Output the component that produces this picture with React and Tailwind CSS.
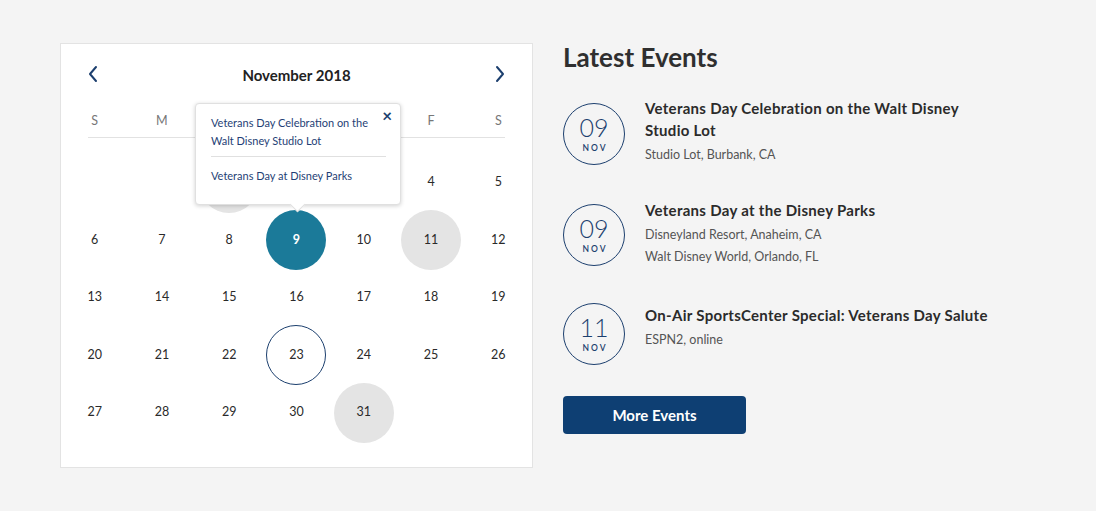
const weekdays = ["S", "M", "T", "W", "T", "F", "S"];

// null = empty cell, numbers from the picture as shown
const weeks = [
  [null, null, { d: 1, mark: "gray" }, { d: 2 }, { d: 3 }, { d: 4 }, { d: 5 }],
  [{ d: 6 }, { d: 7 }, { d: 8 }, { d: 9, mark: "active" }, { d: 10 }, { d: 11, mark: "gray" }, { d: 12 }],
  [{ d: 13 }, { d: 14 }, { d: 15 }, { d: 16 }, { d: 17 }, { d: 18 }, { d: 19 }],
  [{ d: 20 }, { d: 21 }, { d: 22 }, { d: 23, mark: "today" }, { d: 24 }, { d: 25 }, { d: 26 }],
  [{ d: 27 }, { d: 28 }, { d: 29 }, { d: 30 }, { d: 31, mark: "gray" }, null, null],
];

const events = [
  {
    day: "09",
    title: "Veterans Day Celebration on the Walt Disney Studio Lot",
    places: ["Studio Lot, Burbank, CA"],
    row: "",
    circle: "mt-[6px]",
  },
  {
    day: "09",
    title: "Veterans Day at the Disney Parks",
    places: ["Disneyland Resort, Anaheim, CA", "Walt Disney World, Orlando, FL"],
    row: "",
    circle: "mt-[5px]",
  },
  {
    day: "11",
    title: "On-Air SportsCenter Special: Veterans Day Salute",
    places: ["ESPN2, online"],
    row: "mt-[3px]",
    circle: "mt-[-1px]",
  },
];

const Chevron = ({ dir }) => (
  <svg width="12" height="18" viewBox="0 0 12 18" fill="none">
    <polyline
      points={dir === "left" ? "9,2 3,9 9,16" : "3,2 9,9 3,16"}
      stroke="#1c3f6e"
      strokeWidth="2"
      strokeLinecap="round"
      strokeLinejoin="round"
    />
  </svg>
);

const DayCell = ({ cell }) => {
  if (!cell) return <div className="h-[57.5px]" />;
  let circle = "";
  let text = "text-[#2a2a2a]";
  if (cell.mark === "gray") circle = "bg-[#e4e4e4]";
  if (cell.mark === "active") {
    circle = "bg-[#1b7a99]";
    text = "text-white font-bold";
  }
  if (cell.mark === "today") circle = "border-[1.5px] border-[#1c3f6e]";
  return (
    <div className="h-[57.5px] flex items-center justify-center">
      <div
        className={`w-[60px] h-[60px] shrink-0 rounded-full flex items-center justify-center text-[12.5px] ${circle} ${text}`}
      >
        {cell.d}
      </div>
    </div>
  );
};

const App = () => {
  return (
    <div
      className="w-[1096px] h-[511px] bg-[#f4f4f4] flex items-start pl-[60px] pt-[43px] gap-[30px]"
      style={{ fontFamily: "Lato, 'Open Sans', sans-serif" }}
    >
      <div className="relative w-[473px] h-[425px] bg-white border border-[#e3e3e3]">
        <div className="h-[60px] flex items-center justify-between px-[22px]">
          <button type="button" className="p-1">
            <Chevron dir="left" />
          </button>
          <h2 className="text-[15px] font-bold text-[#222] pt-[2px]">
            November 2018
          </h2>
          <button type="button" className="p-1">
            <Chevron dir="right" />
          </button>
        </div>

        <div className="grid grid-cols-7 h-[33px] items-center pt-[2px]">
          {weekdays.map((w, i) => (
            <div key={i} className="text-center text-[12.5px] text-[#777]">
              {w}
            </div>
          ))}
        </div>
        <div className="mx-[27px] border-b border-[#e2e2e2]" />

        <div className="mt-[16px]">
          {weeks.map((week, i) => (
            <div key={i} className="grid grid-cols-7">
              {week.map((cell, j) => (
                <DayCell key={j} cell={cell} />
              ))}
            </div>
          ))}
        </div>

        <div className="absolute left-[134px] top-[59px] w-[206px] h-[102px] bg-white rounded-[4px] border border-[#e0e0e0] shadow-[0_1px_4px_rgba(0,0,0,0.18)] pl-[15px] pr-[14px] pt-[10px] text-[11px] leading-[18px] text-[#1f3f76]">
          <button
            type="button"
            className="absolute right-[8px] top-[3px] text-[#1c3f6e] text-[17px] font-bold leading-none"
          >
            ×
          </button>
          <p className="w-[165px]">
            Veterans Day Celebration on the Walt Disney Studio Lot
          </p>
          <div className="border-b border-[#e0e0e0] mt-[6px] mb-[10px]" />
          <p>Veterans Day at Disney Parks</p>
          <div className="absolute left-[96px] -bottom-[6px] w-[11px] h-[11px] bg-white rotate-45 border-r border-b border-[#e0e0e0]" />
        </div>
      </div>

      <div className="flex flex-col">
        <h1 className="text-[26px] leading-[30px] font-bold text-[#2f2f2f] mt-[-1px]">
          Latest Events
        </h1>
        <div className="mt-[25px] flex flex-col gap-[33px]">
          {events.map((ev, i) => (
            <div key={i} className={`flex items-start ${ev.row}`}>
              <div
                className={`${ev.circle} w-[62px] h-[62px] shrink-0 rounded-full border-[1.5px] border-[#1c3f6e] flex flex-col items-center justify-center text-[#1c3f6e]`}
              >
                <span className="text-[25px] leading-[26px] font-light">
                  {ev.day}
                </span>
                <span className="text-[8.5px] tracking-[2px] font-semibold pl-[2px] mt-[2px]">
                  NOV
                </span>
              </div>
              <div className="ml-[20px] w-[350px]">
                <h3 className="text-[15px] tracking-[0.3px] leading-[22px] font-bold text-[#2b2b2b]">
                  {ev.title}
                </h3>
                <div className="mt-[3px]">
                  {ev.places.map((p) => (
                    <p
                      key={p}
                      className="text-[12.5px] leading-[22px] text-[#555]"
                    >
                      {p}
                    </p>
                  ))}
                </div>
              </div>
            </div>
          ))}
        </div>
        <button
          type="button"
          className="mt-[31px] w-[183px] h-[38px] rounded-[4px] bg-[#0e3f73] text-white text-[15px] font-bold"
        >
          More Events
        </button>
      </div>
    </div>
  );
};

export default App;
